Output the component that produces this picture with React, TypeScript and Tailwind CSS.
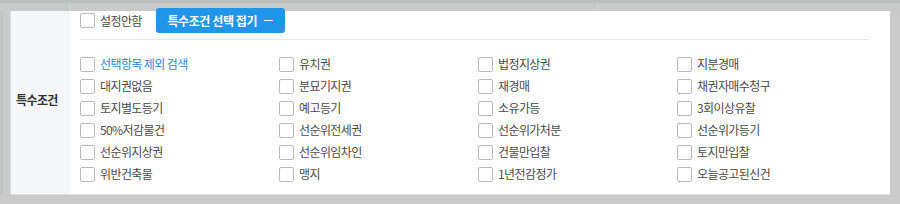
const items: string[] = [
  "선택항목 제외 검색",
  "유치권",
  "법정지상권",
  "지분경매",
  "대지권없음",
  "분묘기지권",
  "재경매",
  "채권자매수청구",
  "토지별도등기",
  "예고등기",
  "소유가등",
  "3회이상유찰",
  "50%저감물건",
  "선순위전세권",
  "선순위가처분",
  "선순위가등기",
  "선순위지상권",
  "선순위임차인",
  "건물만입찰",
  "토지만입찰",
  "위반건축물",
  "맹지",
  "1년전감정가",
  "오늘공고된신건",
];

const Box = () => (
  <span className="w-[15px] h-[15px] shrink-0 rounded-[2px] border border-[#b9b9b9] bg-white" />
);

export default function App() {
  return (
    <div
      className="w-[900px] h-[204px] bg-[#cacaca] flex flex-col overflow-hidden"
      style={{ fontFamily: '"Noto Sans CJK KR", "Noto Sans", sans-serif' }}
    >
      {/* row above, dimmed */}
      <div className="h-[11px] flex border-t-[3px] border-[#bfc1c0] bg-[#c8cac9]">
        <div className="w-[70px] border-r border-[#d2d4d3]" />
        <div className="w-[528px] border-r border-[#d2d4d3]" />
        <div className="flex-1" />
      </div>

      <div className="flex pl-[7px] pr-[10px] border-l-[3px] border-[#c3c5c4]">
        <div className="flex w-[880px] border-l border-[#bcbfbe] border-b border-[#dcdcdc] bg-white">
          <div className="w-[59px] shrink-0 bg-[#f5f6f8] flex items-center pl-[5px] pb-[5px] text-[12px] font-bold text-[#333] tracking-[-0.6px]">
            특수조건
          </div>

          <div className="flex-1 pl-[10px] pr-[21px] pb-[9px]">
            <div className="-mt-[3px] h-[25px] flex items-center">
              <label className="flex items-center gap-[5px] text-[12px] text-[#4a4a4a] tracking-[-0.6px]">
                <Box />
                설정안함
              </label>
              <button className="ml-[14px] h-[25px] w-[129px] rounded-[3px] bg-[#1f96ea] text-white text-[12px] font-semibold tracking-[-0.4px] flex items-center justify-center gap-[7px]">
                특수조건 선택 접기
                <span className="w-[9px] h-px bg-white" />
              </button>
            </div>

            <div className="mt-[6px] h-px bg-[#e4e8ea]" />

            <div className="mt-[13px] grid grid-cols-[199px_199px_199px_1fr]">
              {items.map((t, i) => (
                <label
                  key={t}
                  className={`h-[22px] flex items-center gap-[5px] text-[12px] tracking-[-0.6px] ${
                    i === 0 ? "text-[#2b8ad6]" : "text-[#4a4a4a]"
                  }`}
                >
                  <Box />
                  {t}
                </label>
              ))}
            </div>
          </div>
        </div>
      </div>
    </div>
  );
}
